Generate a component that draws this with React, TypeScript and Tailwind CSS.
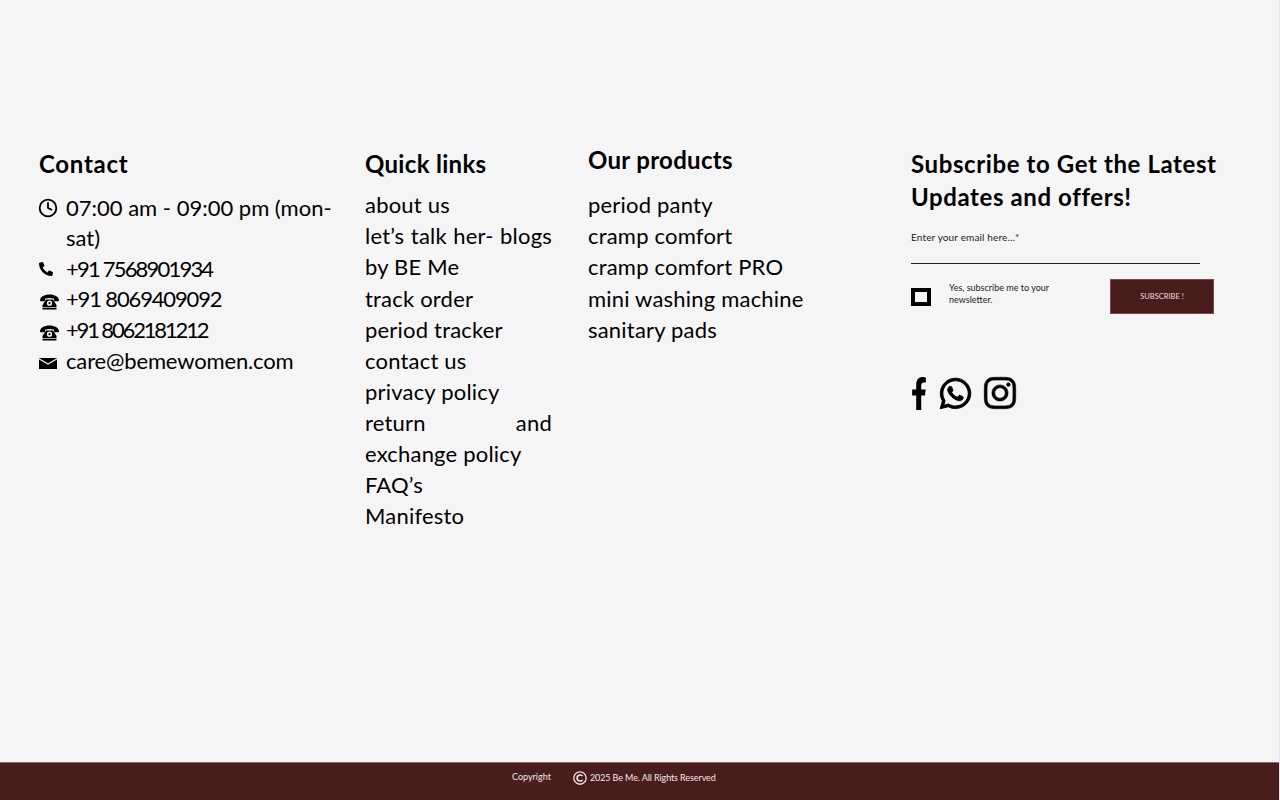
import { FaFacebookF, FaInstagram, FaPhoneAlt, FaRegCopyright, FaWhatsapp } from "react-icons/fa";
import { FiClock } from "react-icons/fi";

const QUICK_LINKS = [
  "about us",
  "let’s talk her- blogs by BE Me",
  "track order",
  "period tracker",
  "contact us",
  "privacy policy",
  "return and exchange policy",
  "FAQ’s",
  "Manifesto",
];

const PRODUCTS = ["period panty", "cramp comfort", "cramp comfort PRO", "mini washing machine", "sanitary pads"];

function DeskPhone() {
  return (
    <svg viewBox="0 0 20 16" className="mt-[5px] h-[16px] w-[21px]" fill="currentColor">
      <path d="M.5 6.200C.7 2.800 4.800.5 10 .5s9.300 2.300 9.500 5.700c0 .7-.4 1.100-1 1.100h-3c-.6 0-1-.4-1-1V4.800C13 4.300 11.500 4 10 4s-3 .3-4.500.8v1.500c0 .6-.4 1-1 1h-3c-.6 0-1-.4-1-1.100z" />
      <path fillRule="evenodd" d="M6.500 5.500h7l3.500 5.500v2.300H3v-2.300zM10 6.600a2.600 2.600 0 1 0 0 5.200 2.600 2.600 0 0 0 0-5.200z" />
      <path d="M3 13.900h14V15.500H3z" />
      <circle cx="10" cy="9.200" r="1.100" />
    </svg>
  );
}

function Envelope() {
  return (
    <svg viewBox="0 0 18 11" className="mt-[6px] h-[11px] w-[18px]">
      <rect width="18" height="11" fill="currentColor" />
      <path d="M0 .8 9 6l9-5.200" fill="none" stroke="#f5f5f5" strokeWidth="1.200" />
    </svg>
  );
}

function ContactRow({ icon, children }: { icon: React.ReactNode; children: React.ReactNode }) {
  return (
    <li className="flex">
      <span className="flex h-[30.600px] w-[27px] shrink-0 items-center">{icon}</span>
      <span>{children}</span>
    </li>
  );
}

export default function App() {
  return (
    <div
      className="flex h-[800px] flex-col overflow-hidden border-r border-[#e2e0f0] bg-[#f5f5f5] text-black"
      style={{ fontFamily: "Lato, sans-serif" }}
    >
      <main className="grid flex-1 grid-cols-[326px_223px_323px_1fr] pl-[39px] pt-[148px]">
        {/* Contact */}
        <section>
          <h3 className="text-[24px] font-bold leading-[32px] tracking-[0.7px]">Contact</h3>
          <ul className="mt-[12.700px] text-[22px] leading-[30.600px]">
            <ContactRow icon={<FiClock className="-ml-[1px] h-[20px] w-[20px]" strokeWidth={2.200} />}>
              07:00 am - 09:00 pm (mon-
              <br />
              sat)
            </ContactRow>
            <ContactRow icon={<FaPhoneAlt className="h-[14px] w-[14px]" />}>
              <span className="tracking-[-1.800px]">+91 7568901934</span>
            </ContactRow>
            <ContactRow icon={<DeskPhone />}>
              <span className="tracking-[-1.150px]">+91 8069409092</span>
            </ContactRow>
            <ContactRow icon={<DeskPhone />}>
              <span className="tracking-[-2.150px]">+91 8062181212</span>
            </ContactRow>
            <ContactRow icon={<Envelope />}>
              <span className="tracking-[-0.150px]">care@bemewomen.com</span>
            </ContactRow>
          </ul>
        </section>

        {/* Quick links */}
        <section>
          <h3 className="text-[24px] font-bold leading-[32px] tracking-[0.300px]">Quick links</h3>
          <ul className="mt-[9.300px] w-[187px] text-justify text-[22px] leading-[31.100px] tracking-[0.200px]">
            {QUICK_LINKS.map((link) => (
              <li key={link}>{link}</li>
            ))}
          </ul>
        </section>

        {/* Our products */}
        <section className="-mt-[4px]">
          <h3 className="text-[24px] font-bold leading-[32px] tracking-[0.300px]">Our products</h3>
          <ul className="mt-[13.300px] text-[22px] leading-[31.100px] tracking-[0.200px]">
            {PRODUCTS.map((product) => (
              <li key={product}>{product}</li>
            ))}
          </ul>
        </section>

        {/* Newsletter */}
        <section>
          <h3 className="-mt-[1px] w-[320px] text-[24px] font-bold leading-[33px] tracking-[0.600px]">
            Subscribe to Get the Latest Updates and offers!
          </h3>
          <label className="mt-[17px] block h-[34px] w-[289px] border-b border-[#222] text-[10px] leading-[14px] tracking-[0.150px] text-[#222]">
            Enter your email here...*
          </label>
          <div className="mt-[15px] flex h-[35px] w-[303px] items-center">
            <span className="h-[18px] w-[20px] shrink-0 border-[4px] border-black bg-[#f5f5f5]" />
            <span className="ml-[18px] w-[130px] -translate-y-[3px] text-[9px] leading-[12px] text-[#222]">
              Yes, subscribe me to your newsletter.
            </span>
            <button className="ml-auto h-[35px] w-[104px] border border-[#7a4a46] bg-[#4a1d1d] text-[7.500px] text-[#f2dcd8]">
              SUBSCRIBE !
            </button>
          </div>
          <div className="mt-[61px] flex items-center">
            <FaFacebookF className="h-[33px] w-[16px]" preserveAspectRatio="none" />
            <FaWhatsapp className="ml-[11px] h-[35px] w-[35px]" stroke="currentColor" strokeWidth={14} />
            <FaInstagram className="ml-[10px] h-[36px] w-[34px]" stroke="currentColor" strokeWidth={8} />
          </div>
        </section>
      </main>

      <footer className="flex h-[38px] shrink-0 items-start border-t border-[#8a6a66] bg-[#4a1d1d] pl-[512px] text-[9px] text-[#f2e6e2]">
        <span className="mt-[7px]">Copyright</span>
        <span className="ml-[22px] mt-[8px] flex items-center gap-[3px] tracking-[-0.100px]">
          <FaRegCopyright className="h-[14px] w-[14px]" />
          2025 Be Me. All Rights Reserved
        </span>
      </footer>
    </div>
  );
}
